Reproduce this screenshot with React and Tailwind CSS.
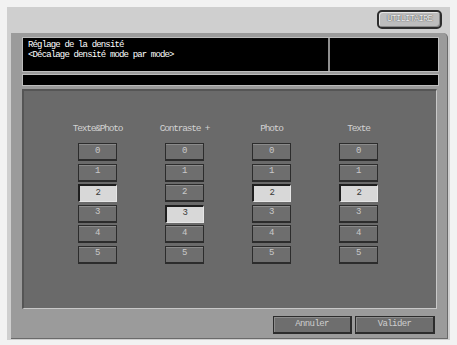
import React from "react";

const mono = "font-['Liberation_Mono','DejaVu_Sans_Mono',monospace]";

const columns = [
  { label: "Texte&Photo", selected: 2 },
  { label: "Contraste +", selected: 3 },
  { label: "Photo", selected: 2 },
  { label: "Texte", selected: 2 },
];

function LevelButton({ value, active }) {
  return (
    <div
      className={`w-[39px] h-[18px] flex items-center justify-center text-[9px] tracking-[-0.5px] ${mono} ${
        active
          ? "bg-[#d8d8d8] text-[#3a3a3a] border-t-2 border-l-2 border-r border-b border-t-[#1e1e1e] border-l-[#1e1e1e] border-r-[#e6e6e6] border-b-[#e6e6e6]"
          : "bg-[#6e6e6e] text-[#c9c9c9] border border-b-2 border-[#2c2c2c] shadow-[inset_0_1px_0_#8a8a8a]"
      }`}
    >
      {value}
    </div>
  );
}

function Column({ label, selected }) {
  return (
    <div className="flex flex-col items-center">
      <div className={`h-[10px] leading-[10px] text-[9.5px] tracking-[-1.2px] text-[#d2d2d2] ${mono}`}>{label}</div>
      <div className="mt-[9px] flex flex-col gap-[2.5px]">
        {[0, 1, 2, 3, 4, 5].map((v) => (
          <LevelButton key={v} value={v} active={v === selected} />
        ))}
      </div>
    </div>
  );
}

function FooterButton({ children, width }) {
  return (
    <div
      className={`${width} h-[18px] flex items-center justify-center bg-[#6e6e6e] border border-b-2 border-r-2 border-[#2c2c2c] shadow-[inset_1px_1px_0_#8c8c8c] text-[9px] tracking-[-0.6px] text-[#cfcfcf] ${mono}`}
    >
      {children}
    </div>
  );
}

export default function App() {
  return (
    <div className="w-[457px] h-[345px] bg-[#f2f2f2] pt-[7px] pl-[7px] overflow-hidden">
      <div className="w-[443px] h-[333px] bg-[#cfcfcf] flex flex-col">
        {/* Top bar */}
        <div className="h-[26px] flex justify-end pr-[8px] pt-[3px]">
          <div className="w-[65px] h-[19px] rounded-[5px] border-2 border-[#2e2e2e] bg-[#bdbdbd] shadow-[inset_1px_1px_0_#e4e4e4,inset_-1px_-1px_0_#8a8a8a] flex items-center justify-center">
            <span className={`text-[9px] tracking-[-0.9px] text-[#eeeeee] [text-shadow:0_0_1px_#555,0_0_1px_#555] ${mono}`}>
              UTILITAIRE
            </span>
          </div>
        </div>

        {/* Main panel */}
        <div className="ml-[4px] w-[437px] h-[306px] bg-[#9b9b9b] rounded-tr-[5px] border-r border-b border-[#6a6a6a] flex flex-col pl-[11px] pt-[4px]">
          {/* Header */}
          <div className="w-[417px] h-[35px] bg-black border border-[#bdbdbd] flex">
            <div className={`w-[305px] pl-[5px] pt-[2px] text-white text-[9px] leading-[10px] tracking-[-0.85px] ${mono}`}>
              <div>Réglage de la densité</div>
              <div>&lt;Décalage densité mode par mode&gt;</div>
            </div>
            <div className="w-[2px] bg-[#8f8f8f]" />
            <div className="flex-1" />
          </div>
          <div className="mt-[2px] w-[417px] h-[12px] bg-black border border-[#bdbdbd]" />

          {/* Inner panel */}
          <div className="mt-[3px] w-[415px] h-[220px] bg-[#6a6a6a] border-t-2 border-l-2 border-t-[#555] border-l-[#555] border-r border-b border-r-[#c8c8c8] border-b-[#c8c8c8] pt-[33px] pl-[30px]">
            <div className="grid grid-cols-[87px_87px_87px_87px]">
              {columns.map((c) => (
                <Column key={c.label} label={c.label} selected={c.selected} />
              ))}
            </div>
          </div>

          {/* Footer */}
          <div className="mt-[7px] w-[415px] flex justify-end gap-[3px] pr-[2px]">
            <FooterButton width="w-[79px]">Annuler</FooterButton>
            <FooterButton width="w-[80px]">Valider</FooterButton>
          </div>
        </div>
      </div>
    </div>
  );
}
